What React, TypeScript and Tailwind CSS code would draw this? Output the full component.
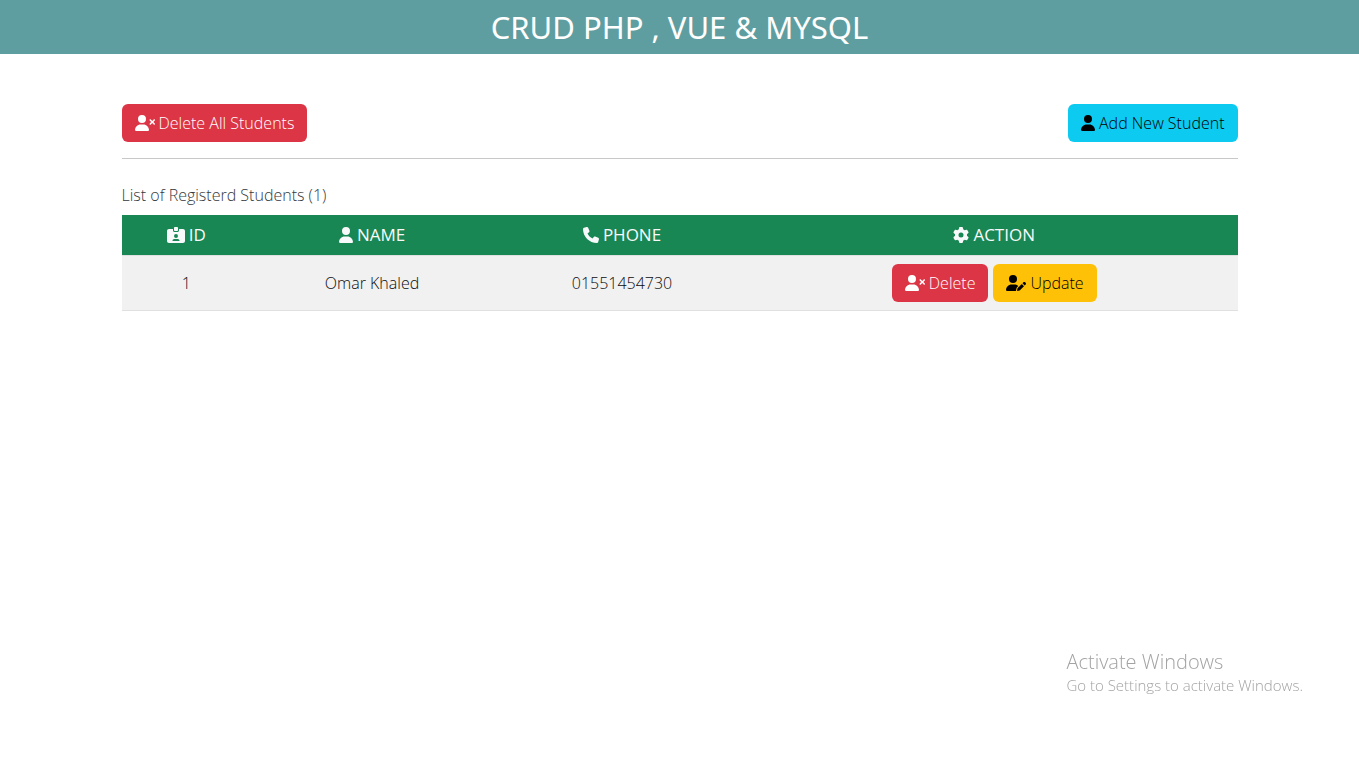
import React from "react";
import { FaGear, FaIdCardClip, FaPhone, FaUser, FaUserPen, FaUserXmark } from "react-icons/fa6";

const students = [{ id: 1, name: "Omar Khaled", phone: "01551454730" }];

const button = "inline-flex h-[38px] items-center gap-1 rounded-md px-3 text-base whitespace-nowrap border border-transparent";
const heading = "h-10 p-2 text-[17px] leading-6 font-normal";
const headingContent = "flex items-center justify-center gap-1";

export default function App() {
  return (
    <div className="min-h-screen bg-white font-['Open_Sans','Noto_Sans',sans-serif] text-base font-light text-[#212529]">
      <header className="flex h-[54px] items-center justify-center bg-[#5f9ea0]">
        <h1 className="font-['Noto_Sans',sans-serif] text-[31px] leading-10 font-normal text-white">CRUD PHP , VUE &amp; MYSQL</h1>
      </header>

      <main className="mx-auto max-w-[1140px] px-3 pt-[50px]">
        <div className="flex items-center justify-between">
          <button type="button" className={`${button} border-[#dc3545] bg-[#dc3545] text-white`}>
            <FaUserXmark className="h-4 w-5" />
            Delete All Students
          </button>
          <button type="button" className={`${button} border-[#0dcaf0] bg-[#0dcaf0] text-black`}>
            <FaUser className="h-4 w-3.5" />
            Add New Student
          </button>
        </div>
        <hr className="my-4 border-[#c7c8c9]" />

        <table className="w-full table-fixed caption-top border-collapse text-center">
          <caption className="py-2 text-left text-[#33383d]">List of Registerd Students ({students.length})</caption>
          <colgroup>
            <col className="w-[11.6%]" />
            <col className="w-[21.7%]" />
            <col className="w-[23.1%]" />
            <col className="w-[43.6%]" />
          </colgroup>
          <thead className="bg-[#198754] text-[#f8f9fa]">
            <tr>
              <th scope="col" className={heading}>
                <span className={headingContent}><FaIdCardClip className="h-4 w-[18px]" />ID</span>
              </th>
              <th scope="col" className={heading}>
                <span className={headingContent}><FaUser className="h-4 w-3.5" />NAME</span>
              </th>
              <th scope="col" className={heading}>
                <span className={headingContent}><FaPhone className="size-4" />PHONE</span>
              </th>
              <th scope="col" className={heading}>
                <span className={headingContent}><FaGear className="size-4" />ACTION</span>
              </th>
            </tr>
          </thead>
          <tbody className="text-[#0b0d0f]">
            {students.map((student) => (
              <tr key={student.id} className="border-y border-[#dfe0e1] bg-[#f1f1f1]">
                <td className="p-2">{student.id}</td>
                <td className="p-2">{student.name}</td>
                <td className="p-2">{student.phone}</td>
                <td className="p-2">
                  <div className="flex justify-center gap-[5px]">
                    <button type="button" className={`${button} border-[#dc3545] bg-[#dc3545] text-white`}>
                      <FaUserXmark className="h-4 w-5" />
                      Delete
                    </button>
                    <button type="button" className={`${button} border-[#ffc107] bg-[#ffc107] text-black`}>
                      <FaUserPen className="h-4 w-5" />
                      Update
                    </button>
                  </div>
                </td>
              </tr>
            ))}
          </tbody>
        </table>
      </main>

      <aside className="pointer-events-none fixed right-14 bottom-[71px] text-[#a3a3a3]">
        <p className="text-xl leading-6">Activate Windows</p>
        <p className="text-[15px] leading-[22px]">Go to Settings to activate Windows.</p>
      </aside>
    </div>
  );
}
